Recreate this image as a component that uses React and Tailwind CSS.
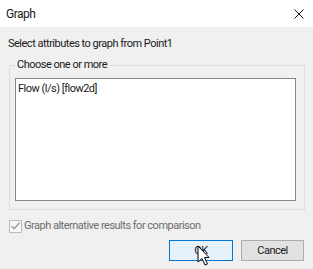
import React from "react";

function Cursor() {
  return (
    <svg
      className="absolute left-[197px] top-[245px]"
      width="13"
      height="22"
      viewBox="0 0 13 22"
    >
      <path
        d="M1 1 L1 17 L5 13.5 L8 20 L10.5 19 L7.5 12.5 L12 12.5 Z"
        fill="#fff"
        stroke="#000"
        strokeWidth="1"
        strokeLinejoin="round"
      />
    </svg>
  );
}

export default function App() {
  return (
    <div className="relative w-[313px] h-[269px] overflow-hidden bg-[#f0f0f0] text-[11px] leading-[16px] tracking-[-0.5px] text-[#1a1a1a] font-['Roboto',sans-serif]">
      <div className="h-[27px] bg-white flex items-center justify-between pl-[6px] pr-[9px]">
        <span className="text-[12px]">Graph</span>
        <svg width="10" height="10" viewBox="0 0 10 10">
          <path d="M0.5 0.5 L9.5 9.5 M9.5 0.5 L0.5 9.5" stroke="#111" strokeWidth="1" />
        </svg>
      </div>

      <div className="pt-[9px] pl-[8px]">Select attributes to graph from Point1</div>

      <fieldset className="mt-[5px] ml-[9px] mr-[8px] border border-[#dcdcdc] pl-[5px] pr-[8px] pt-[5px] pb-[8px]">
        <legend className="px-[2px]">Choose one or more</legend>
        <div className="h-[123px] bg-white border border-[#828790] px-[2px] pt-[2px]">
          Flow (l/s) [flow2d]
        </div>
      </fieldset>

      <label className="mt-[8px] ml-[9px] flex items-center gap-[2px] text-[#6d6d6d]">
        <span className="w-[13px] h-[13px] border border-[#bcbcbc] bg-[#f7f7f7] flex items-center justify-center">
          <svg width="9" height="8" viewBox="0 0 9 8">
            <path d="M0.5 4 L3.2 6.8 L8.5 0.8" fill="none" stroke="#9a9a9a" strokeWidth="1.3" />
          </svg>
        </span>
        <span>Graph alternative results for comparison</span>
      </label>

      <div className="mt-[6px] mr-[9px] flex justify-end gap-[8px]">
        <button className="w-[64px] h-[21px] bg-[#e5f1fb] border border-[#0078d7] leading-[19px]">
          OK
        </button>
        <button className="w-[63px] h-[21px] bg-[#e1e1e1] border border-[#adadad] leading-[19px]">
          Cancel
        </button>
      </div>

      <Cursor />
    </div>
  );
}
